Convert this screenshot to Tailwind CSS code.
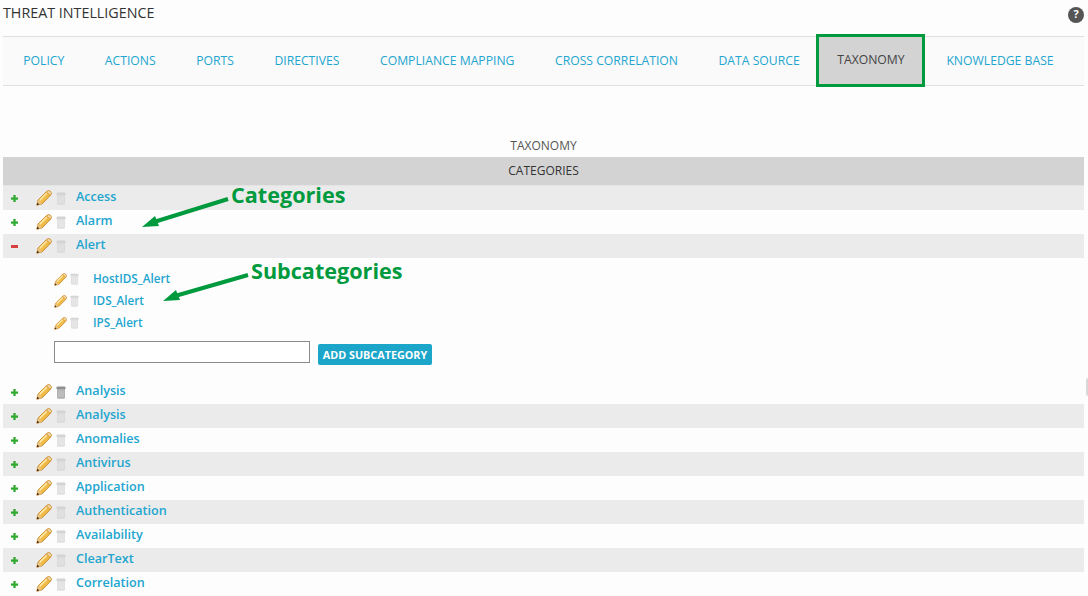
<!DOCTYPE html>
<html lang="en">
<head>
  <meta charset="UTF-8" />
  <title>Threat Intelligence</title>
  <script src="https://cdn.jsdelivr.net/npm/@tailwindcss/browser@4"></script>
</head>
<body class="bg-[#fdfdfd] font-['Open_Sans',sans-serif] h-[596px] overflow-hidden relative">
  <svg class="hidden">
    <symbol id="pencil" viewBox="0 0 16 16">
      <path d="M.8 15.2 L2 10 L10.8 1.4 Q12.6 -.2 14.6 1.4 Q16.2 3.4 14.6 5.2 L6 14 Z" fill="#f0bb48" stroke="#c4862c" stroke-width=".9"/>
      <path d="M3.6 10.4 L11.2 2.8" stroke="#fde9a6" stroke-width="1.5"/>
      <path d="M10.4 2.2 L13.8 5.6" stroke="#d9a04a" stroke-width="1"/>
      <path d="M11.4 1.6 Q13 .6 14.2 1.8 Q15.4 3 14.4 4.6 Z" fill="#f0dcc0"/>
      <path d="M2 10 L6 14 L.8 15.2 Z" fill="#e8c690"/>
      <path d="M.8 15.2 L1.4 12.6 L3.4 14.6 Z" fill="#4a2c0c"/>
    </symbol>
    <symbol id="trash" viewBox="0 0 10 13">
      <path d="M.4 1.8 Q.4 .6 2 .6 H8 Q9.6 .6 9.6 1.8 V3 H.4 Z" fill="currentColor"/>
      <path d="M1 3 H9 V11.6 Q9 12.8 7.8 12.8 H2.2 Q1 12.8 1 11.6 Z" fill="currentColor" opacity=".7"/>
      <path d="M3 4.5 V11 M5 4.5 V11 M7 4.5 V11" stroke="#fff" stroke-width=".7" opacity=".45"/>
    </symbol>
    <symbol id="plus" viewBox="0 0 8 8">
      <path d="M3 0 H5 V3 H8 V5 H5 V8 H3 V5 H0 V3 H3 Z" fill="#2fb12f" stroke="#1a8a1a" stroke-width=".4"/>
    </symbol>
  </svg>

  <div class="flex justify-between items-center h-[36px] pl-[3px] pr-[4px]">
    <h1 class="text-[14.3px] text-[#333] mb-[10px]">THREAT INTELLIGENCE</h1>
    <span class="w-[16px] h-[16px] rounded-full bg-[#555] text-white text-[11px] font-bold flex items-center justify-center -mt-[7px]">?</span>
  </div>

  <nav class="flex mx-[3px] w-[1081px] h-[50px] bg-[#fafafa] border-y border-[#e0e0e0] text-[12.2px] text-[#22a5cf] items-stretch">
    <a class="px-[20.25px] flex items-center">POLICY</a>
    <a class="px-[20.25px] flex items-center">ACTIONS</a>
    <a class="px-[20.25px] flex items-center">PORTS</a>
    <a class="px-[20.25px] flex items-center">DIRECTIVES</a>
    <a class="px-[20.25px] flex items-center">COMPLIANCE MAPPING</a>
    <a class="px-[20.25px] flex items-center">CROSS CORRELATION</a>
    <a class="px-[20.25px] flex items-center">DATA SOURCE</a>
    <a class="-mt-[3px] -mb-[2px] -ml-[3.5px] flex items-center w-[109px] justify-center bg-[#d3d3d3] text-[#444] border-[3px] border-[#009a3e]">TAXONOMY</a>
    <a class="px-5 ml-px flex items-center">KNOWLEDGE BASE</a>
  </nav>

  <div class="mx-[3px] w-[1081px] mt-[50px]">
    <div class="h-[21px] pb-[2px] flex items-center justify-center text-[12px] text-[#555]">TAXONOMY</div>
    <div class="h-[29px] flex items-center justify-center text-[12px] text-[#333] bg-[#d3d3d3] border-b border-[#e4e4e4]">CATEGORIES</div>

    <div class="h-[24px] flex items-center bg-[#ebebeb]">
      <svg class="w-[7px] h-[7px] ml-[8px]"><use href="#plus"/></svg>
      <svg class="w-[16px] h-[16px] ml-[18px]"><use href="#pencil"/></svg>
      <svg class="w-[10px] h-[13px] ml-[4px] text-[#d4d4d4]"><use href="#trash"/></svg>
      <a class="ml-[10px] mb-[2px] text-[12.6px] font-semibold text-[#22a5cf]">Access</a>
    </div>
    <div class="h-[24px] flex items-center">
      <svg class="w-[7px] h-[7px] ml-[8px]"><use href="#plus"/></svg>
      <svg class="w-[16px] h-[16px] ml-[18px]"><use href="#pencil"/></svg>
      <svg class="w-[10px] h-[13px] ml-[4px] text-[#d4d4d4]"><use href="#trash"/></svg>
      <a class="ml-[10px] mb-[2px] text-[12.6px] font-semibold text-[#22a5cf]">Alarm</a>
    </div>
    <div class="h-[24px] flex items-center bg-[#ebebeb]">
      <span class="w-[7px] h-[3px] ml-[8px] bg-[#d84040]"></span>
      <svg class="w-[16px] h-[16px] ml-[18px]"><use href="#pencil"/></svg>
      <svg class="w-[10px] h-[13px] ml-[4px] text-[#d4d4d4]"><use href="#trash"/></svg>
      <a class="ml-[10px] mb-[2px] text-[12.6px] font-semibold text-[#22a5cf]">Alert</a>
    </div>

    <div class="h-[122px] pl-[51px] pt-[10px]">
      <div class="h-[22px] flex items-center">
        <svg class="w-[13px] h-[13px]"><use href="#pencil"/></svg>
        <svg class="w-[9px] h-[12px] ml-[3px] text-[#d4d4d4]"><use href="#trash"/></svg>
        <a class="ml-[14px] text-[11.7px] font-semibold text-[#22a5cf]">HostIDS_Alert</a>
      </div>
      <div class="h-[22px] flex items-center">
        <svg class="w-[13px] h-[13px]"><use href="#pencil"/></svg>
        <svg class="w-[9px] h-[12px] ml-[3px] text-[#d4d4d4]"><use href="#trash"/></svg>
        <a class="ml-[14px] text-[11.7px] font-semibold text-[#22a5cf]">IDS_Alert</a>
      </div>
      <div class="h-[22px] flex items-center">
        <svg class="w-[13px] h-[13px]"><use href="#pencil"/></svg>
        <svg class="w-[9px] h-[12px] ml-[3px] text-[#d4d4d4]"><use href="#trash"/></svg>
        <a class="ml-[14px] text-[11.7px] font-semibold text-[#22a5cf]">IPS_Alert</a>
      </div>
      <div class="flex items-start mt-[7px]">
        <input type="text" class="w-[256px] h-[22px] bg-white border border-[#8a8a8a]" />
        <button class="ml-[8px] h-[21px] mt-[3px] pt-[2px] w-[114px] bg-[#1ba5c9] text-white text-[10.8px] font-bold rounded-[2px]">ADD SUBCATEGORY</button>
      </div>
    </div>

    <div class="h-[24px] flex items-center">
      <svg class="w-[7px] h-[7px] ml-[8px]"><use href="#plus"/></svg>
      <svg class="w-[16px] h-[16px] ml-[18px]"><use href="#pencil"/></svg>
      <svg class="w-[10px] h-[13px] ml-[4px] text-[#8f8f8f]"><use href="#trash"/></svg>
      <a class="ml-[10px] mb-[2px] text-[12.6px] font-semibold text-[#22a5cf]">Analysis</a>
    </div>
    <div class="h-[24px] flex items-center bg-[#ebebeb]">
      <svg class="w-[7px] h-[7px] ml-[8px]"><use href="#plus"/></svg>
      <svg class="w-[16px] h-[16px] ml-[18px]"><use href="#pencil"/></svg>
      <svg class="w-[10px] h-[13px] ml-[4px] text-[#d4d4d4]"><use href="#trash"/></svg>
      <a class="ml-[10px] mb-[2px] text-[12.6px] font-semibold text-[#22a5cf]">Analysis</a>
    </div>
    <div class="h-[24px] flex items-center">
      <svg class="w-[7px] h-[7px] ml-[8px]"><use href="#plus"/></svg>
      <svg class="w-[16px] h-[16px] ml-[18px]"><use href="#pencil"/></svg>
      <svg class="w-[10px] h-[13px] ml-[4px] text-[#d4d4d4]"><use href="#trash"/></svg>
      <a class="ml-[10px] mb-[2px] text-[12.6px] font-semibold text-[#22a5cf]">Anomalies</a>
    </div>
    <div class="h-[24px] flex items-center bg-[#ebebeb]">
      <svg class="w-[7px] h-[7px] ml-[8px]"><use href="#plus"/></svg>
      <svg class="w-[16px] h-[16px] ml-[18px]"><use href="#pencil"/></svg>
      <svg class="w-[10px] h-[13px] ml-[4px] text-[#d4d4d4]"><use href="#trash"/></svg>
      <a class="ml-[10px] mb-[2px] text-[12.6px] font-semibold text-[#22a5cf]">Antivirus</a>
    </div>
    <div class="h-[24px] flex items-center">
      <svg class="w-[7px] h-[7px] ml-[8px]"><use href="#plus"/></svg>
      <svg class="w-[16px] h-[16px] ml-[18px]"><use href="#pencil"/></svg>
      <svg class="w-[10px] h-[13px] ml-[4px] text-[#d4d4d4]"><use href="#trash"/></svg>
      <a class="ml-[10px] mb-[2px] text-[12.6px] font-semibold text-[#22a5cf]">Application</a>
    </div>
    <div class="h-[24px] flex items-center bg-[#ebebeb]">
      <svg class="w-[7px] h-[7px] ml-[8px]"><use href="#plus"/></svg>
      <svg class="w-[16px] h-[16px] ml-[18px]"><use href="#pencil"/></svg>
      <svg class="w-[10px] h-[13px] ml-[4px] text-[#d4d4d4]"><use href="#trash"/></svg>
      <a class="ml-[10px] mb-[2px] text-[12.6px] font-semibold text-[#22a5cf]">Authentication</a>
    </div>
    <div class="h-[24px] flex items-center">
      <svg class="w-[7px] h-[7px] ml-[8px]"><use href="#plus"/></svg>
      <svg class="w-[16px] h-[16px] ml-[18px]"><use href="#pencil"/></svg>
      <svg class="w-[10px] h-[13px] ml-[4px] text-[#d4d4d4]"><use href="#trash"/></svg>
      <a class="ml-[10px] mb-[2px] text-[12.6px] font-semibold text-[#22a5cf]">Availability</a>
    </div>
    <div class="h-[24px] flex items-center bg-[#ebebeb]">
      <svg class="w-[7px] h-[7px] ml-[8px]"><use href="#plus"/></svg>
      <svg class="w-[16px] h-[16px] ml-[18px]"><use href="#pencil"/></svg>
      <svg class="w-[10px] h-[13px] ml-[4px] text-[#d4d4d4]"><use href="#trash"/></svg>
      <a class="ml-[10px] mb-[2px] text-[12.6px] font-semibold text-[#22a5cf]">ClearText</a>
    </div>
    <div class="h-[24px] flex items-center">
      <svg class="w-[7px] h-[7px] ml-[8px]"><use href="#plus"/></svg>
      <svg class="w-[16px] h-[16px] ml-[18px]"><use href="#pencil"/></svg>
      <svg class="w-[10px] h-[13px] ml-[4px] text-[#d4d4d4]"><use href="#trash"/></svg>
      <a class="ml-[10px] mb-[2px] text-[12.6px] font-semibold text-[#22a5cf]">Correlation</a>
    </div>
  </div>

  <!-- annotations on top of the screenshot -->
  <span class="absolute left-[231px] top-[180px] text-[21.6px] leading-[30px] font-bold text-[#009a3e] whitespace-nowrap">Categories</span>
  <span class="absolute left-[251px] top-[256px] text-[21.6px] leading-[30px] font-bold text-[#009a3e] whitespace-nowrap">Subcategories</span>
  <svg class="absolute left-0 top-0 pointer-events-none" width="1088" height="596">
    <path d="M228 199 L154 222" stroke="#009a3e" stroke-width="4"/>
    <path d="M142 227 L155 216 L159 226 Z" fill="#009a3e"/>
    <path d="M248 275 L175 296" stroke="#009a3e" stroke-width="4"/>
    <path d="M163 301 L176 290 L180 300 Z" fill="#009a3e"/>
  </svg>
  <div class="absolute left-[1086px] top-[378px] w-[2px] h-[18px] bg-[#d8d8d8] rounded-l"></div>
</body>
</html>
